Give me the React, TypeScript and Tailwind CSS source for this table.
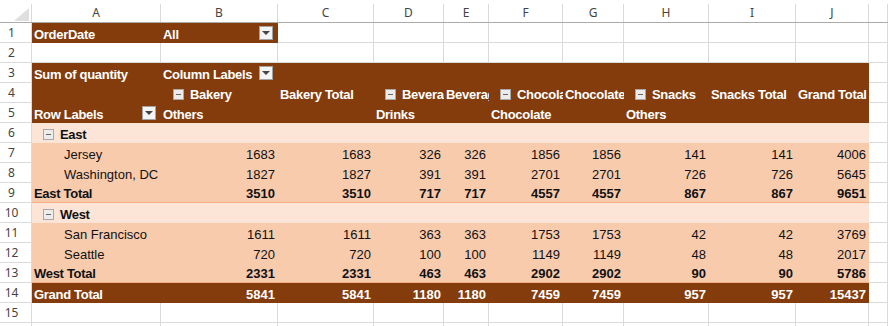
import clsx from 'clsx';
import type { ReactNode } from 'react';

type Tone = 'sheet' | 'brown' | 'light' | 'peach';

const gridCols = 'grid grid-cols-[32px_129px_117px_96px_70px_45px_74px_61px_85px_87px_73px_1fr]';
const letters = ['A', 'B', 'C', 'D', 'E', 'F', 'G', 'H', 'I', 'J', ''];

const toneClass: Record<Tone, string> = {
  sheet: 'border-r border-b border-[#dadada] bg-white',
  brown: 'bg-[#843c0c] text-white font-bold',
  light: 'bg-[#fce4d6] text-[#111]',
  peach: 'bg-[#f8cbad] text-[#111]',
};

interface CellProps {
  tone?: Tone;
  right?: boolean;
  bold?: boolean;
  line?: boolean;
  className?: string;
  children?: ReactNode;
}

const Cell = ({ tone = 'sheet', right, bold, line, className, children }: CellProps) => {
  const heavy = bold || tone === 'brown';
  return (
    <div
      className={clsx(
        'flex h-5 items-end overflow-hidden whitespace-nowrap leading-[16px]',
        toneClass[tone],
        right ? 'justify-end pr-[3px]' : 'pl-[2px]',
        bold && 'font-bold',
        heavy && !right && 'tracking-[-0.3px]',
        line && 'border-b border-[#f4b084]',
        className,
      )}
    >
      {children}
    </div>
  );
};

const RowNum = ({ n }: { n: number | string }) => (
  <div className="flex h-5 items-center justify-center border-r border-b border-[#dadada] pr-2 font-['Noto_Sans',sans-serif] text-[12px] text-[#444]">
    {n}
  </div>
);

const DropButton = () => (
  <span className="mr-[5px] mb-[3px] flex h-[14px] w-[14px] shrink-0 items-center justify-center border border-[#a3a3a3] bg-[#f4f4f4]">
    <span className="h-0 w-0 border-x-[4px] border-t-[4px] border-x-transparent border-t-[#444]" />
  </span>
);

const Collapse = ({ label, indent = 'pl-[8px]' }: { label: string; indent?: string }) => (
  <span className={clsx('flex items-end', indent)}>
    <span className="mb-[3px] flex h-[11px] w-[11px] shrink-0 items-center justify-center border border-[#a8a8a8] bg-[#ececec]">
      <span className="h-[1px] w-[5px] bg-[#666]" />
    </span>
    <span className="ml-[6px]">{label}</span>
  </span>
);

const Sheet = ({ count }: { count: number }) => (
  <>
    {Array.from({ length: count }).map((_, i) => (
      <Cell key={i} />
    ))}
  </>
);

interface DataRow {
  label: string;
  values: number[];
  kind: 'city' | 'total';
}

const regions: { name: string; rows: DataRow[] }[] = [
  {
    name: 'East',
    rows: [
      { label: 'Jersey', values: [1683, 1683, 326, 326, 1856, 1856, 141, 141, 4006], kind: 'city' },
      { label: 'Washington, DC', values: [1827, 1827, 391, 391, 2701, 2701, 726, 726, 5645], kind: 'city' },
      { label: 'East Total', values: [3510, 3510, 717, 717, 4557, 4557, 867, 867, 9651], kind: 'total' },
    ],
  },
  {
    name: 'West',
    rows: [
      { label: 'San Francisco', values: [1611, 1611, 363, 363, 1753, 1753, 42, 42, 3769], kind: 'city' },
      { label: 'Seattle', values: [720, 720, 100, 100, 1149, 1149, 48, 48, 2017], kind: 'city' },
      { label: 'West Total', values: [2331, 2331, 463, 463, 2902, 2902, 90, 90, 5786], kind: 'total' },
    ],
  },
];

const grandTotal = [5841, 5841, 1180, 1180, 7459, 7459, 957, 957, 15437];

export default function App() {
  let rowNo = 5;

  return (
    <div className="h-[326px] w-[888px] overflow-hidden bg-white font-['Liberation_Sans',Arial,sans-serif] text-[13px] text-[#111]">
      {/* column letters */}
      <div className={clsx(gridCols, 'h-[23px] border-b border-[#ababab] pt-[4px]')}>
        <div className="flex items-end justify-end border-r border-[#dadada] pr-[2px] pb-[1px]">
          <svg width="15" height="13" viewBox="0 0 15 13">
            <polygon points="15,0 15,13 0,13" fill="#dfdfdf" />
          </svg>
        </div>
        {letters.map((l, i) => (
          <div
            key={i}
            className="flex items-center justify-center border-r border-[#dadada] font-['Noto_Sans',sans-serif] text-[12px] text-[#444]"
          >
            {l}
          </div>
        ))}
      </div>

      {/* 1 */}
      <div className={gridCols}>
        <RowNum n={1} />
        <Cell tone="brown">OrderDate</Cell>
        <Cell tone="brown" className="justify-between">
          <span>All</span>
          <DropButton />
        </Cell>
        <Sheet count={9} />
      </div>

      {/* 2 */}
      <div className={gridCols}>
        <RowNum n={2} />
        <Sheet count={11} />
      </div>

      {/* 3 */}
      <div className={gridCols}>
        <RowNum n={3} />
        <Cell tone="brown">Sum of quantity</Cell>
        <Cell tone="brown" className="justify-between">
          <span>Column Labels</span>
          <DropButton />
        </Cell>
        {Array.from({ length: 8 }).map((_, i) => (
          <Cell key={i} tone="brown" />
        ))}
        <Cell />
      </div>

      {/* 4 */}
      <div className={gridCols}>
        <RowNum n={4} />
        <Cell tone="brown" />
        <Cell tone="brown" className="pl-0">
          <Collapse label="Bakery" indent="pl-[10px]" />
        </Cell>
        <Cell tone="brown">Bakery Total</Cell>
        <Cell tone="brown" className="pl-0">
          <Collapse label="Beverages" indent="pl-[9px]" />
        </Cell>
        <Cell tone="brown">Beverages Total</Cell>
        <Cell tone="brown" className="pl-0">
          <Collapse label="Chocolate" indent="pl-[9px]" />
        </Cell>
        <Cell tone="brown" className="pl-0">
          Chocolate Total
        </Cell>
        <Cell tone="brown" className="pl-0">
          <Collapse label="Snacks" indent="pl-[9px]" />
        </Cell>
        <Cell tone="brown">Snacks Total</Cell>
        <Cell tone="brown">Grand Total</Cell>
        <Cell />
      </div>

      {/* 5 */}
      <div className={gridCols}>
        <RowNum n={5} />
        <Cell tone="brown" className="justify-between">
          <span>Row Labels</span>
          <DropButton />
        </Cell>
        <Cell tone="brown">Others</Cell>
        <Cell tone="brown" />
        <Cell tone="brown">Drinks</Cell>
        <Cell tone="brown" />
        <Cell tone="brown">Chocolate</Cell>
        <Cell tone="brown" />
        <Cell tone="brown">Others</Cell>
        <Cell tone="brown" />
        <Cell tone="brown" />
        <Cell />
      </div>

      {regions.map((region) => {
        rowNo += 1;
        const headNo = rowNo;
        return (
          <div key={region.name}>
            <div className={gridCols}>
              <RowNum n={headNo} />
              <Cell tone="light" bold className="pl-0">
                <Collapse label={region.name} indent="pl-[9px]" />
              </Cell>
              {Array.from({ length: 9 }).map((_, i) => (
                <Cell key={i} tone="light" />
              ))}
              <Cell />
            </div>
            {region.rows.map((row) => {
              rowNo += 1;
              const total = row.kind === 'total';
              return (
                <div key={row.label} className={gridCols}>
                  <RowNum n={rowNo} />
                  <Cell tone="peach" bold={total} line={total} className={total ? undefined : 'pl-[32px]'}>
                    {row.label}
                  </Cell>
                  {row.values.map((v, i) => (
                    <Cell key={i} tone="peach" right bold={total} line={total}>
                      {v}
                    </Cell>
                  ))}
                  <Cell />
                </div>
              );
            })}
          </div>
        );
      })}

      {/* 14 */}
      <div className={gridCols}>
        <RowNum n={14} />
        <Cell tone="brown">Grand Total</Cell>
        {grandTotal.map((v, i) => (
          <Cell key={i} tone="brown" right>
            {v}
          </Cell>
        ))}
        <Cell />
      </div>

      {/* 15, 16 */}
      <div className={gridCols}>
        <RowNum n={15} />
        <Sheet count={11} />
      </div>
      <div className={gridCols}>
        <RowNum n={16} />
        <Sheet count={11} />
      </div>
    </div>
  );
}
